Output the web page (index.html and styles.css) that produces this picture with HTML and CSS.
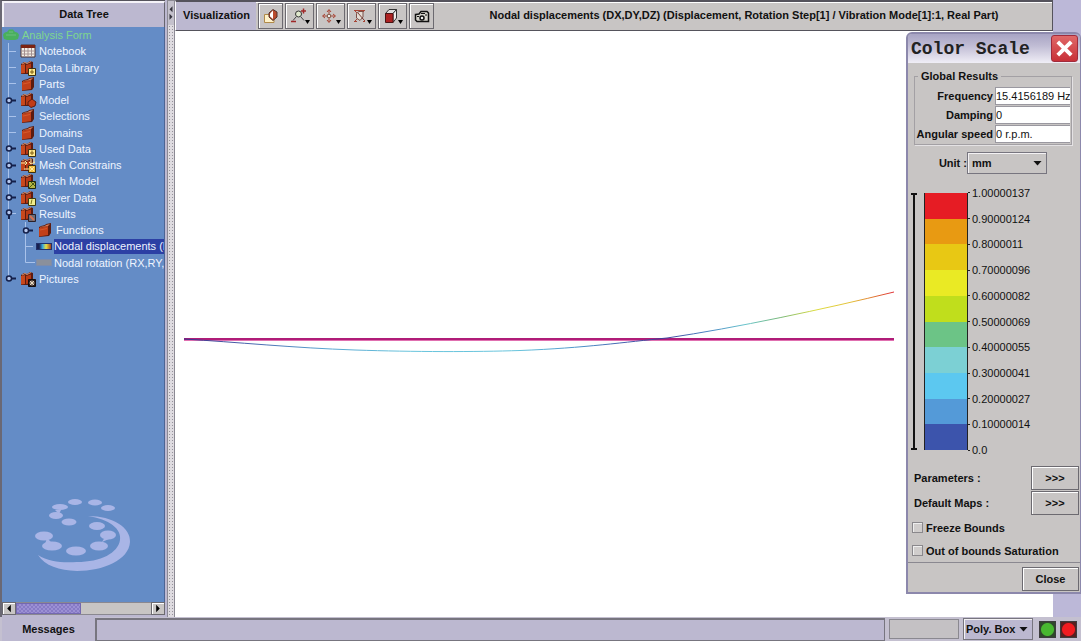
FILE: index.html
```html
<!DOCTYPE html>
<html lang="en">
<head>
<meta charset="utf-8">
<title>Visualization</title>
<link rel="stylesheet" href="styles.css">
</head>
<body>
<svg class="defs" aria-hidden="true">
  <symbol id="folder" viewBox="0 0 18 16">
    <path d="M3 5 L5 4 L9 3 L10 2 L15 1 L15 11 L13 14 L3 15Z" fill="#5c1c10"/>
    <path d="M3 6 L12 4 L12 13 L3 14.500Z" fill="#c2401a"/>
    <path d="M4 5 L9 4 L10 3 L14 2 L12 4 L4 5.500Z" fill="#d9805a"/>
    <path d="M4 8 L11 6.500" stroke="#d65a2c"/>
  </symbol>
  <symbol id="folders" viewBox="0 0 18 16">
    <path d="M2 4 L5 2 L8 3 L11 1 L14 2 L14 11 L12 14 L2 14Z" fill="#5c1c10"/>
    <path d="M2 5 L6 4 L6 13 L2 13.500Z" fill="#c8481c"/>
    <path d="M7 5 L12 3.500 L12 12 L7 13Z" fill="#b83a16"/>
    <path d="M3 4 L6 2.500 L8 3.500 L12 1.500" stroke="#d9906c" fill="none"/>
  </symbol>
  <symbol id="line" viewBox="0 0 14 17"><path d="M4.500 0V17M4.500 8.500H12" stroke="#a9c2ea" fill="none"/></symbol>
  <symbol id="end" viewBox="0 0 14 17"><path d="M4.500 0V8.500H14" stroke="#a9c2ea" fill="none"/></symbol>
  <symbol id="closed" viewBox="0 0 14 17"><path d="M4.500 0V17" stroke="#a9c2ea"/><circle cx="5" cy="8.500" r="2.500" fill="#b7c9ee" stroke="#14204a" stroke-width="1.500"/><path d="M7 8.500H12" stroke="#14204a" stroke-width="2"/></symbol>
  <symbol id="open" viewBox="0 0 14 17"><path d="M4.500 0V17M7 8.500H12" stroke="#a9c2ea"/><circle cx="5" cy="7.500" r="2.500" fill="#b7c9ee" stroke="#14204a" stroke-width="1.500"/><path d="M5 10V14" stroke="#14204a" stroke-width="2"/></symbol>
</svg>

<div class="app">
  <aside class="sidebar">
    <h2 class="panel-title">Data Tree</h2>
    <div class="tree-area">
      <ul class="tree">
        <li class="root"><svg class="icon" viewBox="0 0 18 16"><path d="M1 8 Q2 5 5 5 L7 2.500 L11 2.500 L13 5 Q16 5 17 8 L16 12 L13 13 L5 13 L2 12Z" fill="#49b05c"/><path d="M4 8H14M7 5H11" stroke="#6cbc80"/></svg>Analysis Form</li>
        <li><svg class="handle"><use href="#line"/></svg><svg class="icon" viewBox="0 0 18 16"><path d="M2 2H16V14H2Z" fill="#f4efe6" stroke="#4a3030"/><path d="M2 2H16V5H2Z" fill="#7c2413"/><path d="M2 8H16M2 11H16M5.500 5V14M9 5V14M12.500 5V14" stroke="#a49090"/></svg>Notebook</li>
        <li><svg class="handle"><use href="#line"/></svg><svg class="icon" viewBox="0 0 18 16"><use href="#folders" width="18" height="16"/><path d="M9.500 8.500H16.500V15.500H9.500Z" fill="#ffe98c" stroke="#3c3010"/><path d="M13 9.500V14M11 12H15" stroke="#7a5a10"/></svg>Data Library</li>
        <li><svg class="handle"><use href="#line"/></svg><svg class="icon"><use href="#folder"/></svg>Parts</li>
        <li><svg class="handle"><use href="#closed"/></svg><svg class="icon" viewBox="0 0 18 16"><use href="#folders" width="18" height="16"/><path d="M9 10 L13 7 L17 10 L16 14 L12 15.500 L9 13Z" fill="#c23c16" stroke="#5c1c10"/></svg>Model</li>
        <li><svg class="handle"><use href="#line"/></svg><svg class="icon"><use href="#folder"/></svg>Selections</li>
        <li><svg class="handle"><use href="#line"/></svg><svg class="icon"><use href="#folder"/></svg>Domains</li>
        <li><svg class="handle"><use href="#closed"/></svg><svg class="icon" viewBox="0 0 18 16"><use href="#folders" width="18" height="16"/><path d="M9.500 8.500H16.500V15.500H9.500Z" fill="#ffe98c" stroke="#3c3010"/><path d="M13 9.500V14M11 12H15" stroke="#7a5a10"/></svg>Used Data</li>
        <li><svg class="handle"><use href="#closed"/></svg><svg class="icon" viewBox="0 0 18 16"><use href="#folders" width="18" height="16"/><path d="M9.500 8.500H16.500V15.500H9.500Z" fill="#f4c040" stroke="#3c3010"/><path d="M2 6H8M6 4L8 6L6 8M5 12H10M12 2V7M15 1V7M10 5L12 7L16 5M11 10L15 14M15 10L11 14" stroke="#ffe9a0" fill="none"/></svg>Mesh Constrains</li>
        <li><svg class="handle"><use href="#closed"/></svg><svg class="icon" viewBox="0 0 18 16"><use href="#folders" width="18" height="16"/><path d="M9.500 8.500H16.500V15.500H9.500Z" fill="#b5b544" stroke="#202810"/><path d="M10 15L16 9M12 9L16 13" stroke="#4a5a18"/></svg>Mesh Model</li>
        <li><svg class="handle"><use href="#closed"/></svg><svg class="icon" viewBox="0 0 18 16"><use href="#folders" width="18" height="16"/><path d="M9.500 8.500H16.500V15.500H9.500Z" fill="#f0ec8c" stroke="#3c3a10"/><path d="M13 9.500L12 14" stroke="#7a7418"/></svg>Solver Data</li>
        <li><svg class="handle"><use href="#open"/></svg><svg class="icon" viewBox="0 0 18 16"><use href="#folders" width="18" height="16"/><path d="M9.500 8.500H16.500V15.500H9.500Z" fill="#6c6c78" stroke="#2a2028"/><path d="M11 10L15 14" stroke="#d87050" stroke-width="2"/></svg>Results</li>
        <li><svg class="handle"><path d="M4.500 0V17" stroke="#a9c2ea"/></svg><svg class="handle nested"><use href="#closed"/></svg><svg class="icon"><use href="#folder"/></svg>Functions</li>
        <li><svg class="handle"><path d="M4.500 0V17" stroke="#a9c2ea"/></svg><svg class="handle nested"><use href="#line"/></svg><span class="swatch"></span><span class="selected">Nodal displacements (D</span></li>
        <li><svg class="handle"><path d="M4.500 0V17" stroke="#a9c2ea"/></svg><svg class="handle nested"><use href="#end"/></svg><span class="swatch muted"></span><span class="name">Nodal rotation (RX,RY,R</span></li>
        <li><svg class="handle"><path d="M4.500 0V8" stroke="#a9c2ea"/><circle cx="5" cy="8.500" r="2.500" fill="#b7c9ee" stroke="#14204a" stroke-width="1.500"/><path d="M7 8.500H12" stroke="#14204a" stroke-width="2"/></svg><svg class="icon" viewBox="0 0 18 16"><use href="#folders" width="18" height="16"/><path d="M9.500 8.500H16.500V15.500H9.500Z" fill="#2a1c1c" stroke="#140c0c"/><path d="M13 9.500V14.500M10.500 12H15.500M11 10L15 14M15 10L11 14" stroke="#e8d8c0"/></svg>Pictures</li>
      </ul>
      <svg class="brand" viewBox="0 0 96 76" fill="#a9b5e6" aria-hidden="true">
        <ellipse cx="40" cy="6" rx="7" ry="3"/><ellipse cx="60" cy="6.500" rx="7" ry="3"/><ellipse cx="25" cy="11" rx="8" ry="3"/><ellipse cx="73" cy="12" rx="7" ry="3"/><ellipse cx="21" cy="19.500" rx="7" ry="3.500"/><ellipse cx="34" cy="26" rx="7.500" ry="3.500"/><ellipse cx="62" cy="30" rx="8" ry="4"/><ellipse cx="9" cy="40" rx="9" ry="4.500"/><ellipse cx="73" cy="39" rx="8" ry="4.500"/><ellipse cx="17" cy="50" rx="10" ry="4.500"/><ellipse cx="64" cy="50" rx="9" ry="4.500"/><ellipse cx="41" cy="55" rx="10" ry="4.500"/>
        <path d="M12 42 L18 48 L10 48Z M67 46 L70 41 L74 43Z M20 14H26L24 18Z"/>
        <path d="M53 20 C78 20 96 32 95 46 C94 64 68 75 42 75 C24 74 10 70 3 59 C14 66 28 67 42 66 C66 66 83 57 85 44 C87 33 74 23 53 20Z"/>
      </svg>
    </div>
    <div class="scrollbar">
      <button aria-label="Scroll left"><svg viewBox="0 0 12 12"><path d="M8 2V10L4 6Z"/></svg></button>
      <div class="track"><div class="thumb"></div></div>
      <button aria-label="Scroll right"><svg viewBox="0 0 12 12"><path d="M4 2V10L8 6Z"/></svg></button>
    </div>
  </aside>

  <div class="splitter"><svg viewBox="0 0 8 24"><path d="M6 3V11L2 7Z M2 13V21L6 17Z" fill="#33323c"/></svg></div>

  <main class="main">
    <header class="toolbar">
      <h2 class="toolbar-name">Visualization</h2>
      <button aria-label="Render style"><svg viewBox="0 0 18 16"><path d="M2.500 6.500H12V14.500H2.500Z" fill="#fff2c8" stroke="#b08a48"/><path d="M7 5L11 1.500L15 4V9L11 12.500L7 9Z" fill="#b94a2c" stroke="#503028"/><path d="M8 5.500L11 2.500V11L8 8.500Z" fill="#fff"/></svg></button>
      <button class="drop" aria-label="Zoom"><svg viewBox="0 0 22 18"><path d="M7 10L4 13.500M12 10L15 13.500" stroke="#444"/><circle cx="9.500" cy="7" r="3" fill="#dfe8cc" stroke="#333"/><path d="M12 4H17M14.500 1.500V6.500M2 14.500H7" stroke="#a02828" stroke-width="1.500"/><path d="M16 13H21L18.500 17Z"/></svg></button>
      <button class="drop" aria-label="Pan"><svg viewBox="0 0 22 18"><path d="M9 3V15M3 9H15" stroke="#a84434"/><path d="M7 5L9 2.500L11 5M7 13L9 15.500L11 13M5 7L2.500 9L5 11M13 7L15.500 9L13 11" fill="none" stroke="#a84434"/><path d="M7.500 7.500H10.500V10.500H7.500Z" fill="#eee" stroke="#865"/><path d="M16 13H21L18.500 17Z"/></svg></button>
      <button class="drop" aria-label="Fit view"><svg viewBox="0 0 22 18"><path d="M3 3.500H14M3 14.500H6M12 14.500H14" stroke="#a84434"/><path d="M4 4L14 14M6 12L3 15M11 6L14 3" stroke="#a84434"/><path d="M5.500 11V6.500L8 4.500H12V10L9 13.500Z" fill="#e4dcd4" stroke="#7a5048"/><path d="M7 6L13 13" stroke="#7a4038"/><path d="M16 13H21L18.500 17Z"/></svg></button>
      <button class="drop" aria-label="View cube"><svg viewBox="0 0 22 18"><path d="M3.500 6.500L7 2.500H14.500L11 6.500Z" fill="#ddd" stroke="#333"/><path d="M11 6.500L14.500 2.500V11L11 15.500Z" fill="#f0eeee" stroke="#333"/><path d="M3.500 6.500H11V15.500H3.500Z" fill="#ad2222" stroke="#4a1414"/><path d="M16 13H21L18.500 17Z"/></svg></button>
      <button aria-label="Capture image"><svg viewBox="0 0 18 16"><path d="M2.500 6.500L6 6L8 3.500H14L15.500 5V13.500H4L2.500 12Z" fill="#d6d4cc" stroke="#111" stroke-width="1.500"/><circle cx="9" cy="10" r="2" fill="#eee" stroke="#111" stroke-width="1.500"/><path d="M4 8.500H6M12 7H14M8 5.500H12" stroke="#111"/></svg></button>
      <h1 class="view-title">Nodal displacements (DX,DY,DZ) (Displacement, Rotation Step[1] / Vibration Mode[1]:1, Real Part)</h1>
    </header>
    <div class="viewport">
      <svg viewBox="0 0 878 586" preserveAspectRatio="xMinYMin meet" role="img" aria-label="Beam displacement curve">
        <defs><linearGradient id="displacement" gradientUnits="userSpaceOnUse" x1="9" y1="0" x2="719" y2="0">
          <stop offset="0" stop-color="#3b2f8c"/><stop offset=".1" stop-color="#4a6ab0"/><stop offset=".2" stop-color="#58a4d0"/><stop offset=".32" stop-color="#68c4dc"/><stop offset=".47" stop-color="#68c4dc"/><stop offset=".56" stop-color="#4c90c8"/><stop offset=".67" stop-color="#3f3a98"/><stop offset=".74" stop-color="#4a88c4"/><stop offset=".79" stop-color="#68c4cc"/><stop offset=".84" stop-color="#78b878"/><stop offset=".89" stop-color="#dcdc40"/><stop offset=".94" stop-color="#e4c038"/><stop offset=".97" stop-color="#e07830"/><stop offset="1" stop-color="#e03038"/>
        </linearGradient></defs>
        <path d="M9 308H719" stroke="#b01c78" stroke-width="2"/>
        <path d="M9 309.500H719" stroke="#e070b0"/>
        <path d="M9 308 C60 311 120 317 180 319 C240 321 300 321 345 319.500 C410 317 450 311 492 307 C560 297 650 278 719 261" fill="none" stroke="url(#displacement)" stroke-width="1"/>
      </svg>
    </div>
  </main>
  <div class="edge"></div>
</div>

<footer class="status">
  <label class="status-name" for="messages">Messages</label>
  <input class="messages" id="messages" readonly>
  <div class="progress"></div>
  <div class="picker lilac"><select aria-label="Selection mode"><option>Poly. Box</option></select></div>
  <button class="lamp green" aria-label="Ready"></button>
  <button class="lamp red" aria-label="Stop"></button>
</footer>

<section class="dialog" role="dialog" aria-labelledby="dialog-title">
  <header class="dialog-bar">
    <h2 id="dialog-title">Color Scale</h2>
    <button class="dismiss" aria-label="Close window"><svg viewBox="0 0 26 26"><path d="M6 6L20 20M20 6L6 20" stroke="#fff" stroke-width="4"/></svg></button>
  </header>
  <div class="dialog-body">
    <fieldset class="results">
      <legend>Global Results</legend>
      <label for="frequency">Frequency</label><input id="frequency" value="15.4156189 Hz">
      <label for="damping">Damping</label><input id="damping" value="0">
      <label for="speed">Angular speed</label><input id="speed" value="0 r.p.m.">
    </fieldset>
    <div class="unit">
      <label for="unit">Unit :</label>
      <div class="picker"><select id="unit"><option>mm</option></select></div>
    </div>
    <div class="scale">
      <div class="bracket"></div>
      <div class="bands">
        <i class="b1"></i><i class="b2"></i><i class="b3"></i><i class="b4"></i><i class="b5"></i><i class="b6"></i><i class="b7"></i><i class="b8"></i><i class="b9"></i><i class="b10"></i>
      </div>
      <ol class="ticks">
        <li>1.00000137</li><li>0.90000124</li><li>0.8000011</li><li>0.70000096</li><li>0.60000082</li><li>0.50000069</li><li>0.40000055</li><li>0.30000041</li><li>0.20000027</li><li>0.10000014</li><li>0.0</li>
      </ol>
    </div>
    <div class="more"><span id="params">Parameters :</span><button aria-describedby="params">&gt;&gt;&gt;</button></div>
    <div class="more"><span id="maps">Default Maps :</span><button aria-describedby="maps">&gt;&gt;&gt;</button></div>
    <label class="check"><input type="checkbox">Freeze Bounds</label>
    <label class="check"><input type="checkbox">Out of bounds Saturation</label>
  </div>
  <footer class="dialog-foot"><button>Close</button></footer>
</section>
</body>
</html>
```
FILE: styles.css
```css
* { box-sizing: border-box; }
html, body { height: 100%; }
body {
  margin: 0;
  display: flex;
  flex-direction: column;
  background: #bcb8d0;
  color: #111;
  font: bold 11px/16px "Liberation Sans", Arial, sans-serif;
  overflow: hidden;
}
h1, h2, ul, ol { margin: 0; padding: 0; font-size: inherit; list-style: none; }
button, input, select { font: inherit; color: inherit; margin: 0; border-radius: 0; }
button {
  padding: 0;
  background: #c8c5c4;
  border: 1px solid #6c6a70;
  box-shadow: inset 1px 1px #fff;
}
svg { display: block; }
.defs { position: absolute; width: 0; height: 0; }

.app { flex: 1; min-height: 0; display: grid; grid-template-columns: 165px 10px 1fr 28px; }

/* Data tree */
.sidebar { display: flex; flex-direction: column; min-width: 0; border-top: 1px solid #55535c; border-left: 2px solid #6a6874; padding-bottom: 2px; }
.panel-title { height: 26px; padding-top: 3px; text-align: center; background: #bcb8d0; border: 2px solid #f4f2f8; border-right: 1px solid #66646e; border-bottom: 0; line-height: 16px; }
.tree-area { flex: 1; min-height: 0; display: flex; flex-direction: column; justify-content: space-between; background: #648cc6; border-right: 1px solid #4c6494; overflow: hidden; }
.tree { display: grid; grid-auto-rows: 1fr; height: 260px; color: #eef4ff; font-weight: normal; white-space: nowrap; }
.tree li { display: flex; align-items: center; min-width: 0; min-height: 0; padding-left: 2px; }
.tree .root { padding-left: 0; color: #7fd68e; gap: 2px; }
.handle { width: 14px; height: 17px; flex: none; }
.nested { margin-left: 3px; }
.icon { width: 18px; height: 16px; flex: none; margin-right: 2px; margin-left: 1px; }
.root .icon { margin: 0; }
.swatch { flex: none; width: 16px; height: 7px; margin: 0 2px 0 1px; border: 1px solid #20306c; background: linear-gradient(90deg, #182050 15%, #38a8e0 40%, #e8e040 65%, #a04020); }
.muted { background: #8a909c; border-color: #7c8cac; }
.selected { flex: 1; background: #2c40a4; height: 15px; line-height: 15px; }
.brand { width: 96px; height: 76px; margin: 0 0 30px 33px; }
.scrollbar { display: flex; height: 13px; flex: none; }
.scrollbar button { width: 14px; }
.scrollbar svg { width: 12px; height: 11px; }
.track { flex: 1; background: #c8c5c4; border: 1px solid #8a8890; border-width: 1px 0; }
.thumb { width: 48%; height: 100%; background: repeating-conic-gradient(#9c90d4 0 25%, #877bc6 0 50%) 0 0 / 4px 4px; border: 1px solid #7468b0; }

.splitter { margin-left: 2px; background: radial-gradient(#96939c 1px, transparent 1px) 0 0 / 3px 3px #dedbe0; border: 1px solid #8c8a94; border-width: 1px 1px 0; }
.splitter svg { width: 6px; height: 24px; background: #c4c1cc; }

/* Visualization */
.main { min-width: 0; display: flex; flex-direction: column; }
.toolbar { display: flex; align-items: stretch; height: 31px; flex: none; gap: 2px; background: #c8c5c4; border: 1px solid #55535c; border-left-color: #fff; border-top-width: 2px; border-bottom-width: 1px; box-shadow: inset 0 1px #fff; }
.toolbar-name { width: 80px; padding: 5px 0 0 7px; background: #bcb8d0; }
.toolbar button { width: 25px; margin: 1px 0; display: grid; place-items: center; }
.toolbar button.drop { width: 29px; }
.toolbar button svg { width: 18px; height: 16px; }
.toolbar button.drop svg { width: 22px; height: 18px; }
.view-title { flex: 1; padding-top: 5px; text-align: center; white-space: nowrap; }
.viewport { flex: 1; min-height: 0; background: #fff; }
.viewport svg { width: 100%; }
.edge { background: #bcb8d8; }

/* Status bar */
.status { display: flex; align-items: center; flex: none; height: 24px; padding: 0 4px 0 2px; background: #c4c0d0; }
.status-name { width: 93px; text-align: center; background: #bcb8d0; line-height: 24px; }
.messages { flex: 1; min-width: 0; height: 23px; background: #bcb8d0; border: 2px solid #77757f; border-width: 2px 1px 1px 2px; }
.progress { width: 70px; height: 20px; margin: 0 4px; background: #c4c1c4; border: 1px solid #8a8890; }
.picker { display: inline-grid; width: 80px; height: 22px; background: #c8c5c4; border: 1px solid #77757f; box-shadow: inset 1px 1px #f4f2f4; align-items: center; }
.picker select, .picker::after { grid-area: 1 / 1; }
.picker select { appearance: none; width: 100%; height: 20px; padding: 0 0 0 4px; background: transparent; border: 0; }
.picker::after { content: ""; justify-self: end; margin-right: 4px; width: 9px; height: 5px; background: #111; clip-path: polygon(0 0, 100% 0, 50% 100%); pointer-events: none; }
.lilac { width: 70px; background: #bcb8d0; }
.lilac select { padding-left: 2px; }
.lamp { width: 17px; height: 17px; margin-left: 6px; border: 1px solid #3c3c3c; box-shadow: none; }
.green { background: radial-gradient(#48b830 6px, #30482c 7px); }
.red { margin-left: 4px; background: radial-gradient(#f01c20 6px, #582020 7px); }

/* Color scale window */
.dialog { position: absolute; top: 32px; right: 0; width: 175px; background: #c8c5c4; border: 2px solid #8c88ac; border-right-width: 1px; border-radius: 6px 6px 0 0; }
.dialog-bar { display: flex; align-items: center; justify-content: space-between; height: 29px; padding: 0 2px 0 3px; background: linear-gradient(#a8a4c4, #c0bcd4 40%, #f0eef6); border-radius: 4px 4px 0 0; }
.dialog-bar h2 { font: bold 18px/28px "Liberation Mono", monospace; color: #222; }
.dismiss { width: 27px; height: 27px; background: linear-gradient(#e06868, #c83038); border: 1px solid #a02c3c; border-radius: 3px; box-shadow: none; }
.dismiss svg { width: 25px; height: 25px; }
.dialog-body { padding: 6px 1px 0 6px; }
.results { display: grid; grid-template-columns: 1fr 75px; column-gap: 2px; row-gap: 1px; margin: 0 7px 0 0; padding: 3px 1px 1px 0; border: 1px solid #a3a0a4; box-shadow: 1px 1px #e4e2e4; }
.results legend { margin-left: 3px; padding: 0 3px; height: 15px; line-height: 15px; }
.results label { text-align: right; line-height: 18px; white-space: nowrap; }
.results input { width: 75px; height: 18px; padding: 0; background: #fff; border: 1px solid #9a98a0; border-right: 0; font-weight: normal; }
.unit { display: flex; justify-content: flex-end; align-items: center; margin: 7px 32px 0 0; }
.scale { display: grid; grid-template-columns: 10px 44px 1fr; height: 257px; margin-top: 19px; }
.bracket { width: 6px; margin-left: -3px; border: 2px solid #111; border-width: 2px 0; background: linear-gradient(#111, #111) center / 2px 100% no-repeat; }
.bands { display: flex; flex-direction: column; border: 1px solid #222; border-width: 0 1px; }
.bands i { flex: 1; }
.b1 { background: #e61c24; } .b2 { background: #e89a12; } .b3 { background: #e8c814; } .b4 { background: #eaea24; } .b5 { background: #c0de1c; }
.b6 { background: #6cc486; } .b7 { background: #7cd0d4; } .b8 { background: #5cc8f0; } .b9 { background: #549ad8; } .b10 { background: #3c54ac; }
.ticks { display: flex; flex-direction: column; margin: -13px 0; font-weight: normal; }
.ticks li { flex: 1; display: flex; align-items: center; gap: 2px; }
.ticks li::before { content: ""; width: 2px; height: 1px; background: #222; }
.more { display: flex; justify-content: space-between; align-items: center; margin-bottom: 1px; }
.scale + .more { margin-top: 16px; }
.more button { width: 48px; height: 24px; }
.check { display: flex; align-items: center; gap: 3px; height: 23px; margin-left: -2px; }
.check input { appearance: none; width: 11px; height: 11px; background: #d0cdcc; border: 1px solid #8a888c; box-shadow: inset 1px 1px #eee; }
.dialog-foot { display: flex; justify-content: flex-end; padding: 4px 1px 1px; border-top: 1px solid #8a8890; }
.dialog-foot button { width: 57px; height: 24px; }
```
